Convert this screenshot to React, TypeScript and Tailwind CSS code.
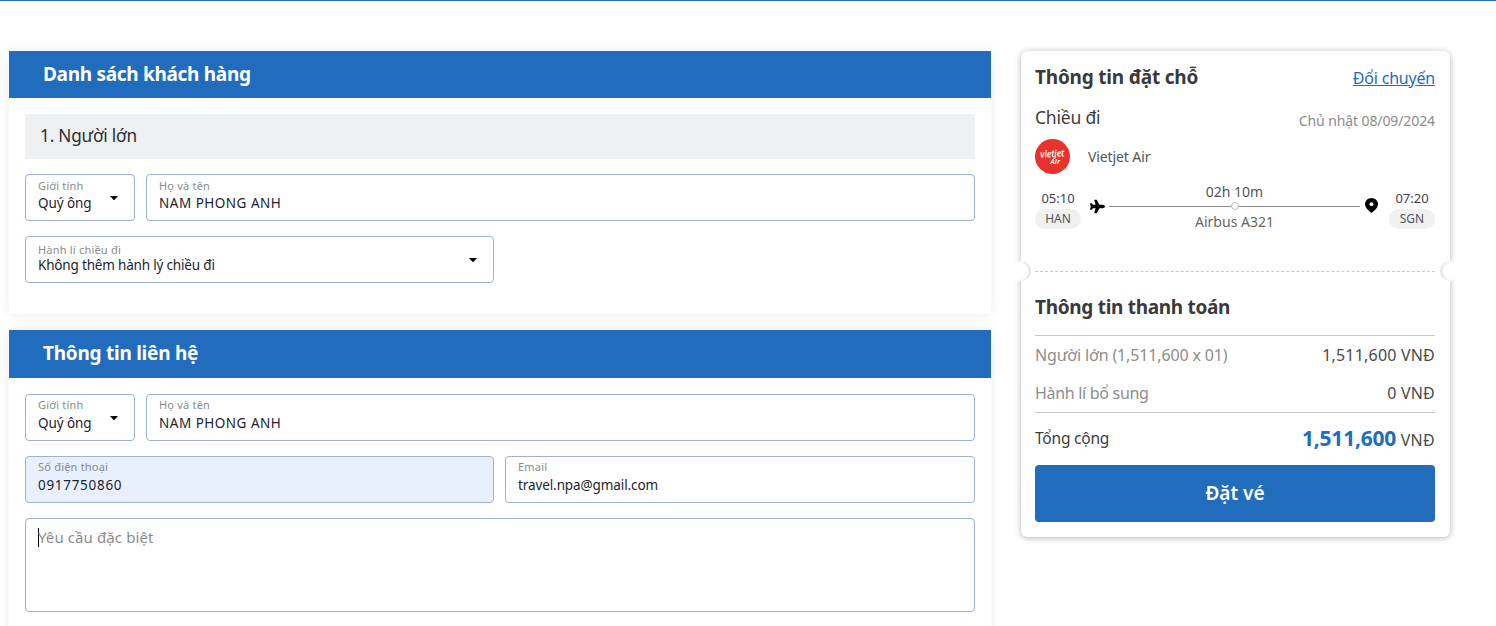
import { FaPlane } from "react-icons/fa";

const Caret = () => (
  <svg width="8" height="4" viewBox="0 0 8 4" className="shrink-0">
    <path d="M0 0 H8 L4.6 3.7 Q4 4.2 3.4 3.7 Z" fill="#000" />
  </svg>
);

const Pin = () => (
  <svg width="13" height="15" viewBox="0 0 13 15" className="ml-[5px] mb-[8px] shrink-0">
    <path
      d="M6.5 0C2.9 0 0 2.8 0 6.2 0 10.4 6.5 15 6.5 15S13 10.4 13 6.2C13 2.8 10.1 0 6.5 0Z"
      fill="#000"
    />
    <circle cx="6.5" cy="6.2" r="1.9" fill="#fff" />
  </svg>
);

const Logo = () => (
  <svg width="35" height="35" viewBox="0 0 35 35" className="shrink-0">
    <circle cx="17.5" cy="17.5" r="17.5" fill="#e8322e" />
    <text
      x="17.5"
      y="18"
      textAnchor="middle"
      fontSize="9.5"
      fontWeight="600"
      fontStyle="italic"
      fill="#fff"
      textLength="24"
      lengthAdjust="spacingAndGlyphs"
      transform="rotate(-4 17.5 18)"
    >
      vietjet
    </text>
    <text x="25" y="25" textAnchor="end" fontSize="7.5" fontWeight="600" fontStyle="italic" fill="#fff">
      Air
    </text>
  </svg>
);

function Field({
  label,
  value,
  className = "",
  select = false,
  tint = false,
  labelClass = "mt-[3px] mb-[1px]",
  valueClass = "tracking-[-0.1px]",
}: {
  label: string;
  value: string;
  className?: string;
  select?: boolean;
  tint?: boolean;
  labelClass?: string;
  valueClass?: string;
}) {
  return (
    <div
      className={`h-[47px] rounded-[4px] border border-[#9eb0d3] pl-3 pr-2 flex items-center justify-between ${
        tint ? "bg-[#e8f0fe]" : "bg-white"
      } ${className}`}
    >
      <div className="min-w-0 self-start">
        <div className={`h-[14px] text-[11px] leading-[14px] text-[#8a8a8a] tracking-[0.2px] ${labelClass}`}>{label}</div>
        <div className={`text-[13.5px] leading-[20px] text-[#1c2430] whitespace-nowrap ${valueClass}`}>{value}</div>
      </div>
      {select && (
        <div className="mr-[8px] flex">
          <Caret />
        </div>
      )}
    </div>
  );
}

function SectionHeader({ title, className }: { title: string; className: string }) {
  return (
    <div className={`bg-[#226cbd] flex items-center pl-[34px] text-[19px] font-bold text-white ${className}`}>
      {title}
    </div>
  );
}

const NotchLeft = () => (
  <div className="absolute top-[210px] left-[-10px] w-[20px] h-[20px] rounded-full bg-white shadow-[inset_-3px_0_3px_-1px_rgba(0,0,0,0.14)]" />
);

const NotchRight = () => (
  <div className="absolute top-[210px] right-[-10px] w-[20px] h-[20px] rounded-full bg-white shadow-[inset_3px_0_3px_-1px_rgba(0,0,0,0.14)]" />
);

export default function App() {
  return (
    <div className="h-[626px] overflow-hidden bg-white border-t border-[#226cbd] font-['Noto_Sans','Open_Sans',sans-serif]">
      <div className="flex items-start pl-[9px] pt-[50px]">
        <div className="w-[982px] shrink-0 flex flex-col gap-[16px]">
          <section className="bg-white shadow-[0_0_12px_rgba(0,0,0,0.08)] h-[263px]">
            <SectionHeader title="Danh sách khách hàng" className="h-[47px] tracking-[-0.3px]" />
            <div className="p-4 flex flex-col gap-[15px]">
              <div className="h-[45px] pb-[1px] bg-[#eff0f2] flex items-center pl-[15px] text-[17.2px] text-[#2a2f36] tracking-[-0.2px]">
                1. Người lớn
              </div>
              <div className="flex gap-[11px]">
                <Field label="Giới tính" value="Quý ông" select labelClass="mt-[4px] mb-0" className="w-[110px] shrink-0" />
                <Field
                  label="Họ và tên"
                  value="NAM PHONG ANH"
                  labelClass="mt-[4px] mb-0"
                  valueClass="tracking-[0.5px]"
                  className="flex-1"
                />
              </div>
              <Field
                label="Hành lí chiều đi"
                value="Không thêm hành lý chiều đi"
                select
                labelClass="mt-[6px] mb-[-2px]"
                valueClass="tracking-[-0.18px]"
                className="w-[469px]"
              />
            </div>
          </section>
          <section className="bg-white shadow-[0_0_12px_rgba(0,0,0,0.08)] h-[320px]">
            <SectionHeader title="Thông tin liên hệ" className="h-[48px] pb-[1px] tracking-[-0.25px]" />
            <div className="p-4 flex flex-col gap-[15px]">
              <div className="flex gap-[11px]">
                <Field label="Giới tính" value="Quý ông" select className="w-[110px] shrink-0" />
                <Field label="Họ và tên" value="NAM PHONG ANH" valueClass="tracking-[0.5px]" className="flex-1" />
              </div>
              <div className="flex gap-[11px]">
                <Field label="Số điện thoại" value="0917750860" valueClass="tracking-[0.7px]" tint className="w-[469px] shrink-0" />
                <Field label="Email" value="travel.npa@gmail.com" className="flex-1" />
              </div>
              <div className="h-[94px] rounded-[4px] border border-[#9eb0d3] pl-3 pt-[9px] flex items-start">
                <span className="w-px h-[19px] bg-black mr-[-1px] shrink-0" />
                <span className="text-[15px] leading-[19px] text-[#8b8b8b] tracking-[0.1px]">Yêu cầu đặc biệt</span>
              </div>
            </div>
          </section>
        </div>

        <aside className="relative ml-[30px] w-[429px] h-[486px] shrink-0 rounded-[6px] bg-white shadow-[0_1px_6px_rgba(0,0,0,0.3)] pl-[14px] pr-[15px]">
          <NotchLeft />
          <NotchRight />
          <div className="flex items-center justify-between pt-[13px] h-[40px]">
            <h2 className="text-[19px] font-bold text-[#3a3a3a] tracking-[-0.2px]">Thông tin đặt chỗ</h2>
            <a className="text-[16px] text-[#226cbd] underline tracking-[-0.2px]">Đổi chuyến</a>
          </div>
          <div className="flex items-center justify-between mt-[16px] h-[20px]">
            <span className="text-[17.5px] text-[#3d3d3d] tracking-[-0.2px]">Chiều đi</span>
            <span className="text-[14px] text-[#8d8d8d] mt-[7px] tracking-[-0.1px]">Chủ nhật 08/09/2024</span>
          </div>
          <div className="flex items-center mt-[12px] gap-[18px]">
            <Logo />
            <span className="text-[14px] text-[#555] tracking-[-0.1px]">Vietjet Air</span>
          </div>
          <div className="flex items-center mt-[15px]">
            <div className="w-[46px] flex flex-col items-center">
              <span className="text-[13px] leading-[18px] text-[#444]">05:10</span>
              <span className="w-[46px] h-[20px] mt-[2px] rounded-full bg-[#eff0f2] text-center text-[12px] leading-[20px] text-[#555]">HAN</span>
            </div>
            <FaPlane className="ml-[9px] w-[15px] h-[15px] text-black shrink-0 mb-[5px]" />
            <div className="relative w-[251px] ml-[4px] h-[1px] bg-[#8f8f8f] mb-[6px] shrink-0">
              <span className="absolute left-[122px] top-[-4px] w-[8px] h-[8px] rounded-full bg-white border border-[#bbb]" />
              <span className="absolute left-0 right-0 top-[-23px] text-center text-[14px] leading-[18px] text-[#555]">02h 10m</span>
              <span className="absolute left-0 right-0 top-[7px] text-center text-[14px] leading-[18px] text-[#666]">Airbus A321</span>
            </div>
            <Pin />
            <div className="ml-auto w-[46px] flex flex-col items-center">
              <span className="text-[13px] leading-[18px] text-[#444]">07:20</span>
              <span className="w-[46px] h-[20px] mt-[2px] rounded-full bg-[#eff0f2] text-center text-[12px] leading-[20px] text-[#555]">SGN</span>
            </div>
          </div>
          <div className="mt-[42px] border-t border-dashed border-[#c9c9c9]" />
          <h2 className="mt-[22px] h-[27px] text-[19px] leading-[27px] font-bold text-[#3a3a3a] tracking-[-0.3px]">Thông tin thanh toán</h2>
          <div className="mt-[14px] border-t border-[#c8c8c8]" />
          <div className="flex items-center justify-between h-[38px] text-[16px]">
            <span className="text-[#8d8d8d] tracking-[-0.15px]">Người lớn (1,511,600 x 01)</span>
            <span className="text-[#4a4a4a] tracking-[0.2px]">1,511,600 VNĐ</span>
          </div>
          <div className="flex items-center justify-between h-[38px] text-[16px]">
            <span className="text-[#8d8d8d] tracking-[-0.3px]">Hành lí bổ sung</span>
            <span className="text-[#4a4a4a] tracking-[0.2px]">0 VNĐ</span>
          </div>
          <div className="border-t border-[#c8c8c8]" />
          <div className="flex items-center justify-between h-[52px]">
            <span className="text-[15.5px] text-[#3d3d3d] tracking-[-0.2px]">Tổng cộng</span>
            <span className="text-[16px] text-[#4a4a4a] tracking-[0.3px]">
              <span className="text-[21px] font-bold text-[#226cbd] tracking-[-0.2px]">1,511,600</span> VNĐ
            </span>
          </div>
          <button className="w-full h-[57px] rounded-[4px] bg-[#226cbd] text-white text-[19px] font-semibold">Đặt vé</button>
        </aside>
      </div>
    </div>
  );
}
